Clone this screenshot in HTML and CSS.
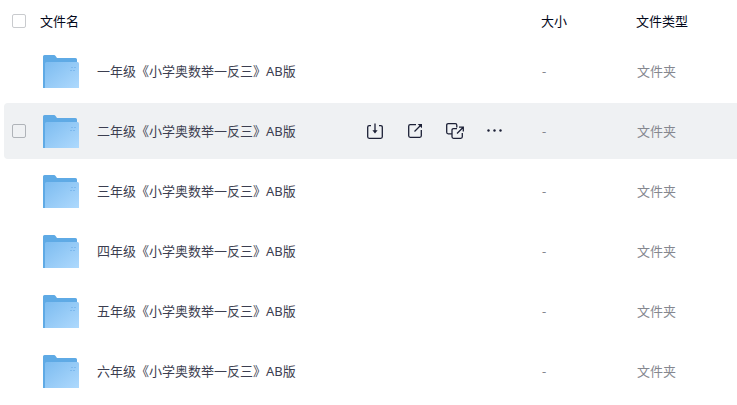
FILE: index.html
```html
<!DOCTYPE html>
<html lang="zh-CN">
<head>
  <meta charset="UTF-8">
  <meta name="viewport" content="width=device-width, initial-scale=1.0">
  <title>文件</title>
  <link rel="stylesheet" href="styles.css">
</head>
<body>

  <svg class="defs" aria-hidden="true">
    <defs>
      <linearGradient id="front" x1="0" y1="0" x2="1" y2="1">
        <stop offset="0" stop-color="#7dbcf0"/>
        <stop offset="1" stop-color="#aed9fd"/>
      </linearGradient>
      <symbol id="folder" viewBox="0 0 36 33">
        <path fill="#5faae5" d="M0 33V1.5Q0 0 1.5 0H11Q12 0 12.6 1L14 3H32.5Q34 3 34 4.5V33Z"/>
        <path fill="url(#front)" d="M2 33V8.5Q2 7 3.5 7H34.5Q36 7 36 8.5V33Z"/>
        <path fill="none" stroke="#7db9ee" stroke-dasharray="2 1" d="M28 12.5H33M27 15.5H33"/>
      </symbol>
    </defs>
  </svg>

  <main class="file-list">
    <table class="file-table">
      <thead>
        <tr>
          <th class="col-check"><input type="checkbox" class="check" aria-label="全选"></th>
          <th class="col-name">文件名</th>
          <th class="col-size">大小</th>
          <th class="col-type">文件类型</th>
        </tr>
      </thead>
      <tbody>
        <tr>
          <td></td>
          <td><div class="name-cell"><svg class="folder"><use href="#folder"/></svg><a href="#">一年级《小学奥数举一反三》AB版</a></div></td>
          <td class="meta">-</td>
          <td class="meta">文件夹</td>
        </tr>
        <tr class="hovered">
          <td class="col-check"><input type="checkbox" class="check" aria-label="选择二年级《小学奥数举一反三》AB版"></td>
          <td>
            <div class="name-cell">
              <svg class="folder"><use href="#folder"/></svg><a href="#">二年级《小学奥数举一反三》AB版</a>
              <div class="actions">
                <button type="button" aria-label="下载">
                  <svg viewBox="0 0 20 20">
                    <path d="M6 4.7H4.2Q2.7 4.7 2.7 6.2V15.8Q2.7 17.3 4.2 17.3H15.8Q17.3 17.3 17.3 15.8V6.2Q17.3 4.7 15.8 4.7H14M10 2.5V10"/>
                    <path class="solid" d="M7.4 9.2H12.6L10 12.6Z"/>
                  </svg>
                </button>
                <button type="button" aria-label="分享">
                  <svg viewBox="0 0 20 20">
                    <path d="M11 3.7H5.2Q3.7 3.7 3.7 5.2V14.8Q3.7 16.3 5.2 16.3H14.8Q16.3 16.3 16.3 14.8V9M9.5 10.5L15.5 4.5"/>
                    <path class="solid" d="M12.7 3H17V7.3Z"/>
                  </svg>
                </button>
                <button type="button" aria-label="转存">
                  <svg viewBox="0 0 20 20">
                    <path d="M11.8 6.5V4.2Q11.8 2.7 10.3 2.7H3.2Q1.7 2.7 1.7 4.2V11.3Q1.7 12.8 3.2 12.8H7M12 7.7H8.5Q7 7.7 7 9.2V15.8Q7 17.3 8.5 17.3H15.8Q17.3 17.3 17.3 15.8V12M12 12.5L18 6.5M14 6.2H18.3V10.5"/>
                  </svg>
                </button>
                <button type="button" aria-label="更多">
                  <svg viewBox="0 0 20 20">
                    <circle class="solid" cx="3.5" cy="9.5" r="1.2"/>
                    <circle class="solid" cx="9.5" cy="9.5" r="1.2"/>
                    <circle class="solid" cx="15.5" cy="9.5" r="1.2"/>
                  </svg>
                </button>
              </div>
            </div>
          </td>
          <td class="meta">-</td>
          <td class="meta">文件夹</td>
        </tr>
        <tr>
          <td></td>
          <td><div class="name-cell"><svg class="folder"><use href="#folder"/></svg><a href="#">三年级《小学奥数举一反三》AB版</a></div></td>
          <td class="meta">-</td>
          <td class="meta">文件夹</td>
        </tr>
        <tr>
          <td></td>
          <td><div class="name-cell"><svg class="folder"><use href="#folder"/></svg><a href="#">四年级《小学奥数举一反三》AB版</a></div></td>
          <td class="meta">-</td>
          <td class="meta">文件夹</td>
        </tr>
        <tr>
          <td></td>
          <td><div class="name-cell"><svg class="folder"><use href="#folder"/></svg><a href="#">五年级《小学奥数举一反三》AB版</a></div></td>
          <td class="meta">-</td>
          <td class="meta">文件夹</td>
        </tr>
        <tr>
          <td></td>
          <td><div class="name-cell"><svg class="folder"><use href="#folder"/></svg><a href="#">六年级《小学奥数举一反三》AB版</a></div></td>
          <td class="meta">-</td>
          <td class="meta">文件夹</td>
        </tr>
      </tbody>
    </table>
  </main>

</body>
</html>
```
FILE: styles.css
```css
* {
  margin: 0;
  padding: 0;
  box-sizing: border-box;
}
body {
  font-family: "Noto Sans", "Noto Sans CJK SC", sans-serif;
  font-size: 13px;
  line-height: 20px;
  background-color: white;
  color: #03081a;
}
.defs {
  display: block;
  width: 0;
  height: 0;
}
.file-list {
  padding-left: 4px;
}
.file-table {
  width: 100%;
  table-layout: fixed;
  border-collapse: separate;
  border-spacing: 0 4px;
}
th {
  height: 35px;
  padding-bottom: 1px;
  font-weight: 400;
  text-align: left;
}
td {
  height: 56px;
}
.col-check {
  width: 36px;
  padding-left: 8px;
}
.col-size {
  width: 95px;
}
.col-type {
  width: 101px;
}
.check {
  display: block;
  appearance: none;
  width: 14px;
  height: 14px;
  border: 1px solid #c9cbce;
  border-radius: 2px;
  background-color: white;
}
.hovered td {
  background-color: #eff1f3;
}
.hovered td:first-child {
  border-radius: 4px 0 0 4px;
}
.hovered .check {
  border-color: #afb3b8;
  background-color: transparent;
}
.name-cell {
  display: flex;
  align-items: center;
  padding-left: 3px;
}
.folder {
  width: 36px;
  height: 33px;
  margin-right: 18px;
}
.name-cell a {
  color: #3c3e50;
  text-decoration: none;
}
.actions {
  display: flex;
  gap: 16px;
  margin-left: auto;
  padding-right: 34px;
}
.actions button {
  display: flex;
  align-items: center;
  justify-content: center;
  width: 24px;
  height: 24px;
  border: none;
  background: none;
  cursor: pointer;
}
.actions svg {
  width: 20px;
  height: 20px;
  fill: none;
  stroke: #1c2036;
  stroke-width: 1.3;
}
.actions .solid {
  fill: #1c2036;
  stroke: none;
}
.meta {
  padding-left: 1px;
  color: #85878f;
}
```
